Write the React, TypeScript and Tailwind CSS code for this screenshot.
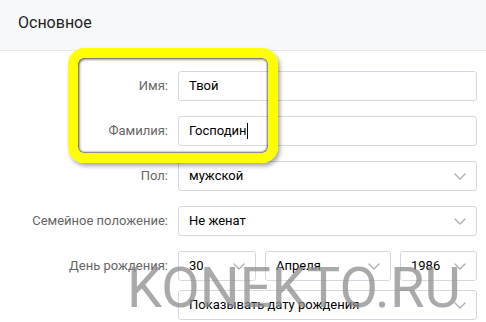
import React from "react";

const Chevron = () => (
  <svg width="12" height="7" viewBox="0 0 12 7" fill="none" className="shrink-0">
    <path d="M1 1l5 5 5-5" stroke="#a8adb3" strokeWidth="1.3" strokeLinecap="round" strokeLinejoin="round" />
  </svg>
);

const Input = ({ value, cursor }: { value: string; cursor?: boolean }) => (
  <div className="h-[30px] border border-[#d3d9de] rounded-[3px] bg-white flex items-center pl-[10px] text-[13px] text-black">
    <span>{value}</span>
    {cursor && <span className="inline-block w-px h-[16px] bg-black" />}
  </div>
);

const Select = ({ value, className = "" }: { value: string; className?: string }) => (
  <div className={`h-[30px] border border-[#d3d9de] rounded-[3px] bg-white flex items-center justify-between pl-[10px] pr-[10px] text-[13px] text-black ${className}`}>
    <span>{value}</span>
    <Chevron />
  </div>
);

const Label = ({ text }: { text: string }) => (
  <div className="h-[30px] flex items-center justify-end text-[13px] text-[#656565]">{text}</div>
);

export default function App() {
  return (
    <div className="relative w-[486px] h-[322px] overflow-hidden bg-white" style={{ fontFamily: "Roboto, 'Liberation Sans', sans-serif" }}>
      <div className="h-[51px] bg-[#f7f8fa] border-b border-[#e7e8ec] flex items-center pl-[18px] pb-[4px] text-[16px] text-[#222]">
        Основное
      </div>
      <div className="grid grid-cols-[168px_299px] gap-x-[10px] gap-y-[15px] pt-[20px]">
        <Label text="Имя:" />
        <Input value="Твой" />
        <Label text="Фамилия:" />
        <Input value="Господин" cursor />
        <Label text="Пол:" />
        <Select value="мужской" />
        <Label text="Семейное положение:" />
        <Select value="Не женат" />
        <Label text="День рождения:" />
        <div className="flex gap-[9px]">
          <Select value="30" className="w-[78px]" />
          <Select value="Апреля" className="w-[126px]" />
          <Select value="1986" className="w-[77px]" />
        </div>
      </div>
      <div className="grid grid-cols-[168px_299px] gap-x-[10px] mt-[9px]">
        <div />
        <Select value="Показывать дату рождения" />
      </div>

      <div
        className="absolute left-[68px] top-[48px] w-[210px] h-[115px] rounded-[16px] border-[10px] border-[#ffff00]"
        style={{ boxShadow: "inset 1px 1px 3px rgba(0,0,0,0.75), inset -1px -1px 2px rgba(0,0,0,0.5), 2px 3px 4px rgba(0,0,0,0.35)" }}
      />

      <div className="absolute left-[127px] top-[260px] text-[56px] leading-none text-[#8c8c8c]/75 whitespace-nowrap pointer-events-none">
        KONEKTO.RU
      </div>
    </div>
  );
}
